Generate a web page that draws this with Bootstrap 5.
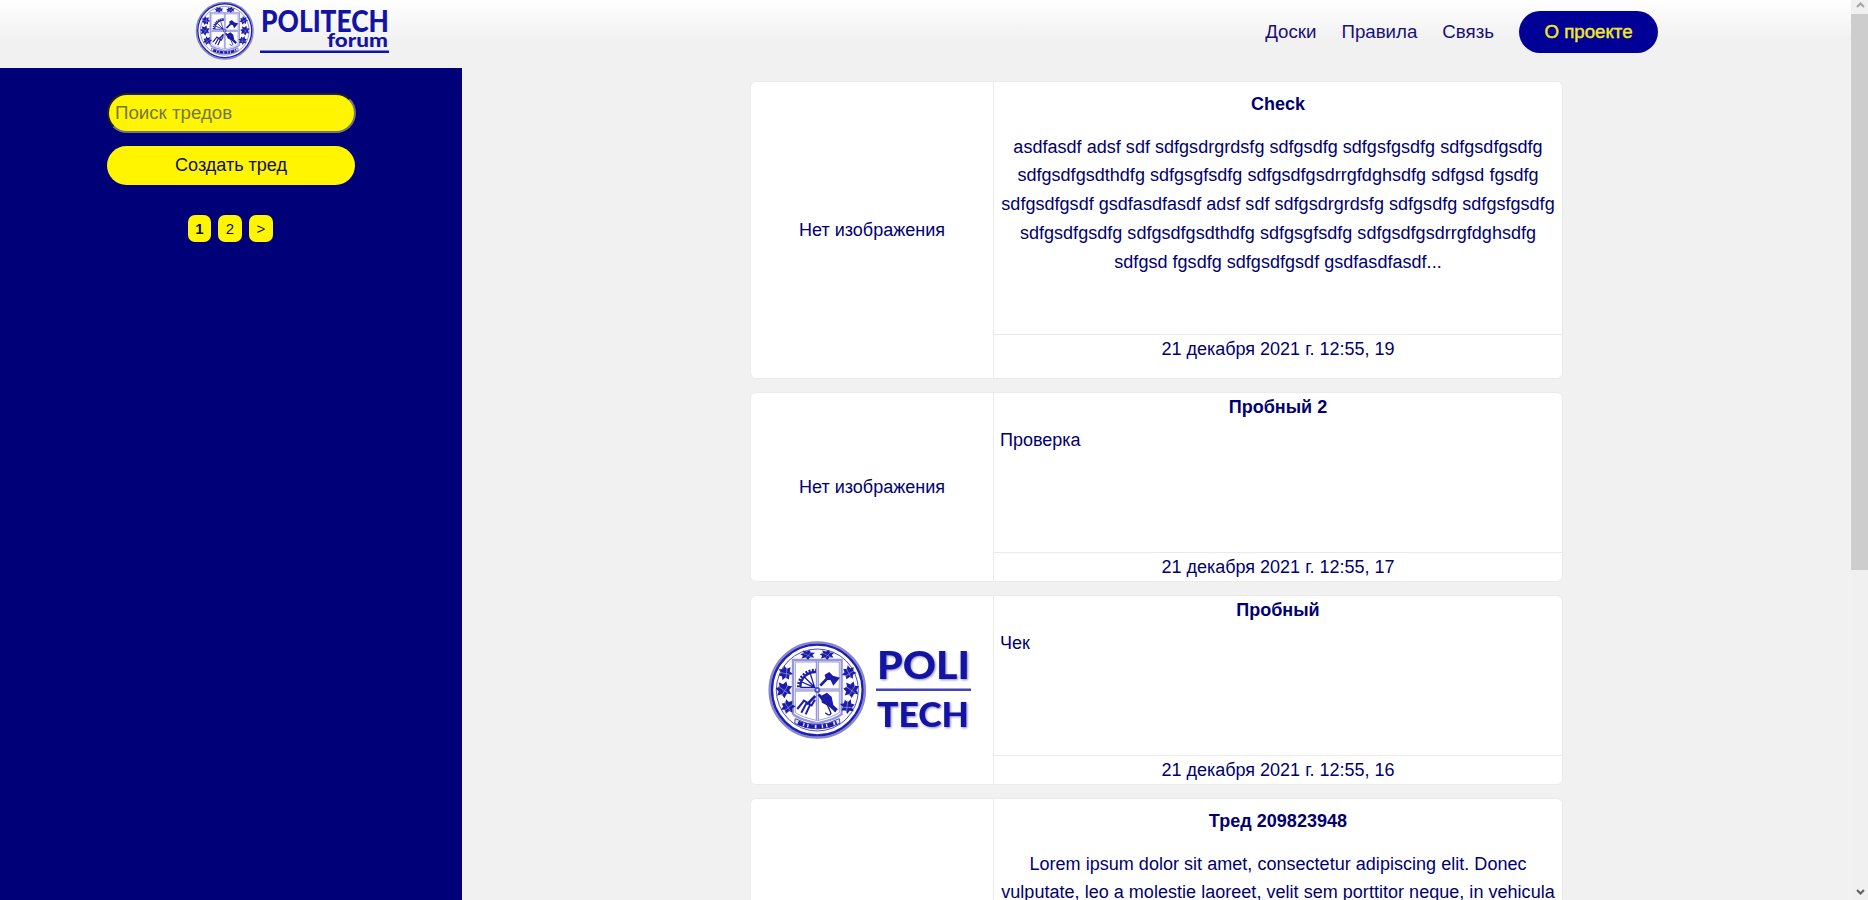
<!DOCTYPE html>
<html lang="ru">
<head>
<meta charset="utf-8">
<title>Politech forum</title>
<link rel="stylesheet" href="https://cdn.jsdelivr.net/npm/bootstrap@5.3.0/dist/css/bootstrap.min.css">
<style>
body{font:18px/28.8px "Liberation Sans",Arial,sans-serif;color:#000070;background:#f1f1f1;height:900px;overflow:hidden}
a{color:inherit;text-decoration:none}
svg{overflow:visible}
.page{height:900px;overflow:hidden;background:linear-gradient(#fff 0,#f1f1f1 40px)}
.topbar{height:68px;padding:0 193px 0 195px}
.topbar nav{gap:25px;margin-top:11px;height:42px;font-size:18.7px}
.topbar nav a{color:#190f78}
.topbar nav .about{background:#000096;color:#f4ea22;border-radius:21px;width:139px;height:42px;line-height:42px;-webkit-text-stroke:.45px #f4ea22}
.side{width:462px;background:#000078;padding-top:25px}
.field{width:249px;height:40px;border-radius:20px;background:#fff500;color:#101050}
input.field{border:2px inset #767676;padding:0 6px;outline:0;font-size:18.7px;margin-left:1px}
input.field::placeholder{color:#757546;opacity:1}
.create{height:39px;margin-top:13px;line-height:39px;width:248px}
.pages{gap:7px;margin-top:30px;padding-right:1px}
.pages a{width:24px;height:27px;border-radius:7px;background:#fff500;color:#101040;font-size:15px;line-height:28px}
.pages a:first-child{width:23px}
.feed{padding:13px 0 0 288px}
.thread{width:813px;height:190px;margin-bottom:13px;background:#fff;border:1px solid #ebebeb;border-radius:6px;flex:none}
.tall{height:298px}
.pic{width:243px;border-right:1px solid #e9e9ee}
.emblem-pic{padding-right:4px}
.txt{padding:0 6px}
.tall .txt{letter-spacing:.03px}
.thread h2{font-size:18px;line-height:28.8px;font-weight:700;margin:0 0 4.6px}
.tall h2{margin:7.5px 0 14.4px}
.date{border-top:1px solid #e9e9ea;height:28.8px}
.tall .date{height:44.5px}
.sbar{width:17px;background:#f0f0f0;height:900px}
.thumb{background:#cdcdcd;height:556px}
</style>
<script src="https://cdn.jsdelivr.net/npm/bootstrap@5.3.0/dist/js/bootstrap.bundle.min.js"></script>
</head>
<body class="d-flex">
<svg width="0" height="0" class="position-absolute">
<defs>
<g id="leaf"><path d="M-17-3L-9-7-11-16-2-12 5-18 7-9 17-8 11 0 15 9 6 8 1 17-5 9-14 12-11 3Z" fill="#1c1ca8"/><path d="M-12-8L10 8M9-11L-5 12" stroke="#9a9add" stroke-width="1.5"/></g>
<symbol id="emblem" viewBox="-150 -150 300 300">
<circle r="143" fill="#fcfcff" stroke="#8585d4" stroke-width="7"/>
<circle r="136" fill="none" stroke="#2020aa" stroke-width="7"/>
<circle r="123" fill="none" stroke="#5050c0" stroke-width="3"/>
<path d="M-73-90H73V72Q60 86 0 100Q-60 86-73 72Z" fill="#fff" stroke="#9696dc" stroke-width="7"/>
<path d="M-66-84H66V68Q50 80 0 92Q-50 80-66 68Z" fill="none" stroke="#6e6ecb" stroke-width="2"/>
<path d="M0-86V92M-66 0H66" stroke="#8585d4" stroke-width="9"/><path d="M0-86V92M-66 0H66" stroke="#dedef8" stroke-width="3"/>
<use href="#leaf" transform="translate(-29 -105) scale(1.3 .85)"/><use href="#leaf" transform="translate(29 -105) scale(1.3 .85)"/>
<use href="#leaf" transform="translate(-95 -50) rotate(-25) scale(1.25)"/><use href="#leaf" transform="translate(95 -51) rotate(25) scale(1.2)"/>
<use href="#leaf" transform="translate(-100 0) scale(1.45)"/><use href="#leaf" transform="translate(102 0) scale(1.4)"/>
<use href="#leaf" transform="translate(-88 51) rotate(20) scale(1.25)"/><use href="#leaf" transform="translate(90 50) rotate(60) scale(1.25)"/>
<path d="M-66 86Q0 122 66 86L68 100Q0 134-68 100Z" fill="#e6e6fa" stroke="#4444bc" stroke-width="3"/>
<path d="M-58 98Q0 122 58 98" fill="none" stroke="#1c1ca8" stroke-width="13" stroke-dasharray="16 4 9 4 19 5"/>
<path d="M-57-8A51 51 0 0 1-4-60" fill="none" stroke="#1c1ca8" stroke-width="8" stroke-dasharray="6 4"/>
<path d="M-51-8A45 45 0 0 1-4-54" fill="none" stroke="#1c1ca8" stroke-width="7"/>
<path d="M-51-8H-5M-8-8L-38-38M-8-8L-21-49M-8-8L-47-24" fill="none" stroke="#1c1ca8" stroke-width="4"/>
<path d="M9-13L31-36M-6 18L-31 43M4 13L24 38" stroke="#1c1ca8" stroke-width="8"/>
<path d="M22-46L36-54 47-43 68-37 48-13 40-29 26-31Z" fill="#1c1ca8"/>
<path d="M-39 31L-60 57M-31 37L-48 68M-21 43L-35 73M-43 30L-17 46-7 29" fill="none" stroke="#1c1ca8" stroke-width="6"/>
<path d="M10 18L29 8 43 20 48 45 62 58 53 66 33 48 14 38Z" fill="#1c1ca8"/>
<path d="M29 42L41 70Q37 80 24 68M44 45L55 66" fill="none" stroke="#1c1ca8" stroke-width="4"/>
<circle r="9" fill="#5555c0"/><circle r="3" fill="#fff"/>
</symbol>
</defs>
</svg>
<div class="page flex-grow-1 d-flex flex-column">
<header class="topbar d-flex justify-content-between align-items-start flex-shrink-0">
<svg width="196" height="62" viewBox="195 0 196 62" fill="#1414a4" font-family="Lato,sans-serif" font-weight="900">
<use href="#emblem" x="195" y="1" width="59.5" height="59.5"/>
<text x="261" y="31.5" font-size="30" textLength="128" lengthAdjust="spacingAndGlyphs">POLITECH</text>
<text x="327" y="47" font-size="19" textLength="61" lengthAdjust="spacingAndGlyphs">forum</text>
<path d="M260 50.5H389V53H260Z"/>
</svg>
<nav class="d-flex align-items-center">
<a href="#">Доски</a><a href="#">Правила</a><a href="#">Связь</a><a href="#" class="about text-center">О проекте</a>
</nav>
</header>
<div class="d-flex flex-grow-1">
<aside class="side d-flex flex-column align-items-center flex-shrink-0">
<input class="field" type="text" placeholder="Поиск тредов">
<a href="#" class="field create text-center">Создать тред</a>
<div class="pages d-flex text-center"><a href="#" class="fw-bold">1</a><a href="#">2</a><a href="#">&gt;</a></div>
</aside>
<main class="feed d-flex flex-column">
<article class="thread tall d-flex">
<div class="pic d-flex align-items-center justify-content-center flex-shrink-0">Нет изображения</div>
<div class="flex-grow-1 d-flex flex-column text-center">
<div class="txt flex-grow-1"><h2>Check</h2>asdfasdf adsf sdf sdfgsdrgrdsfg sdfgsdfg sdfgsfgsdfg sdfgsdfgsdfg<br>sdfgsdfgsdthdfg sdfgsgfsdfg sdfgsdfgsdrrgfdghsdfg sdfgsd fgsdfg<br>sdfgsdfgsdf gsdfasdfasdf adsf sdf sdfgsdrgrdsfg sdfgsdfg sdfgsfgsdfg<br>sdfgsdfgsdfg sdfgsdfgsdthdfg sdfgsgfsdfg sdfgsdfgsdrrgfdghsdfg<br>sdfgsd fgsdfg sdfgsdfgsdf gsdfasdfasdf...</div>
<div class="date">21 декабря 2021 г. 12:55, 19</div></div>
</article>
<article class="thread d-flex">
<div class="pic d-flex align-items-center justify-content-center flex-shrink-0">Нет изображения</div>
<div class="flex-grow-1 d-flex flex-column">
<div class="txt flex-grow-1"><h2 class="text-center">Пробный 2</h2>Проверка</div>
<div class="date text-center">21 декабря 2021 г. 12:55, 17</div></div>
</article>
<article class="thread d-flex">
<div class="pic emblem-pic d-flex align-items-center justify-content-center flex-shrink-0">
<svg width="206" height="100" viewBox="767 640 206 100" fill="#1414a4" font-family="Lato,sans-serif" font-weight="900">
<use href="#emblem" x="767.3" y="640" width="100" height="100"/>
<g style="filter:drop-shadow(1px 1px 1px #8888b8)">
<text x="877" y="679" font-size="37" textLength="93" lengthAdjust="spacingAndGlyphs">POLI</text>
<text x="877" y="727" font-size="35" textLength="92" lengthAdjust="spacingAndGlyphs">TECH</text></g>
<path d="M876 688.5H971V691H876Z" fill="#4444b4"/>
</svg></div>
<div class="flex-grow-1 d-flex flex-column">
<div class="txt flex-grow-1"><h2 class="text-center">Пробный</h2>Чек</div>
<div class="date text-center">21 декабря 2021 г. 12:55, 16</div></div>
</article>
<article class="thread tall d-flex">
<div class="pic flex-shrink-0"></div>
<div class="flex-grow-1 text-center txt"><h2>Тред 209823948</h2>Lorem ipsum dolor sit amet, consectetur adipiscing elit. Donec<br>vulputate, leo a molestie laoreet, velit sem porttitor neque, in vehicula</div>
</article>
</main>
</div>
</div>
<div class="sbar d-flex flex-column flex-shrink-0">
<svg width="17" height="14" fill="none" stroke="#a3a3a3" stroke-width="2"><path d="M6 7L9.5 3.5 13 7"/></svg>
<div class="thumb"></div>
<svg class="mt-auto" width="17" height="17" fill="none" stroke="#606060" stroke-width="2"><path d="M6 7L9.5 10.5 13 7"/></svg>
</div>
</body>
</html>
